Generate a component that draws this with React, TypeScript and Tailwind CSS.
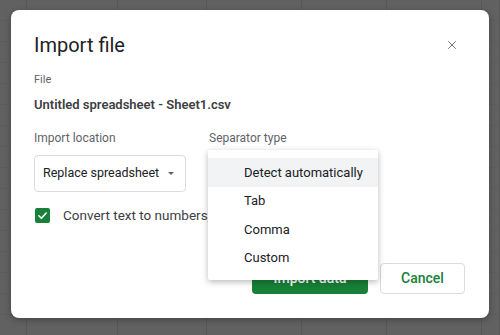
import { X } from 'lucide-react';

const columns = [27, 91, 89, 95, 85, 95, 18];
const rows = Array.from({ length: 16 });

export default function App() {
  return (
    <div className="relative w-[500px] h-[335px] overflow-hidden bg-[#616161] font-['Roboto',sans-serif]">
      {/* dimmed spreadsheet behind the dialog */}
      <div className="flex h-full">
        {columns.map((w, i) => (
          <div key={i} className="flex flex-col shrink-0 border-r border-[#585858]" style={{ width: w }}>
            {rows.map((_, r) => (
              <div key={r} className="h-[21px] shrink-0 border-b border-[#5d5d5d]" />
            ))}
          </div>
        ))}
      </div>

      {/* dialog */}
      <div className="absolute left-[11px] top-[10px] w-[478px] h-[308px] bg-white rounded-[8px] shadow-[0_2px_6px_rgba(0,0,0,0.3)] flex flex-col pl-[23px] pr-[24px] pt-[21px]">
        <div className="flex items-center justify-between h-[28px]">
          <h1 className="text-[20px] leading-[28px] text-[#202124]">Import file</h1>
          <button className="w-[24px] h-[24px] flex items-center justify-center mr-[1px] text-[#5f6368]">
            <X className="w-[14px] h-[14px]" strokeWidth={1.5} />
          </button>
        </div>

        <div className="mt-[13px] text-[11px] leading-[16px] text-[#5f6368]">File</div>
        <div className="mt-[7px] text-[13px] leading-[20px] font-semibold text-[#3c4043]">
          Untitled spreadsheet - Sheet1.csv
        </div>

        <div className="mt-[15px] flex">
          <div className="w-[175px] flex flex-col">
            <div className="text-[12px] leading-[16px] text-[#5f6368]">Import location</div>
            <div className="mt-[9px] w-[152px] h-[37px] border border-[#dadce0] rounded-[4px] flex items-center pl-[8px] gap-[9px]">
              <span className="text-[12.5px] whitespace-nowrap text-[#202124]">Replace spreadsheet</span>
              <span className="w-0 h-0 border-l-[3.5px] border-r-[3.5px] border-t-[3.5px] border-l-transparent border-r-transparent border-t-[#5f6368]" />
            </div>
          </div>
          <div className="flex flex-col">
            <div className="text-[12px] leading-[16px] text-[#5f6368]">Separator type</div>
          </div>
        </div>

        <label className="mt-[16px] flex items-center h-[15px]">
          <span className="ml-[1px] w-[15px] h-[15px] rounded-[2px] bg-[#188038] flex items-center justify-center">
            <svg viewBox="0 0 12 12" className="w-[11px] h-[11px]" fill="none">
              <path d="M2 6.3 L4.8 9 L10 3.3" stroke="white" strokeWidth="1.8" strokeLinecap="round" strokeLinejoin="round" />
            </svg>
          </span>
          <span className="ml-[13px] text-[13.5px] whitespace-nowrap text-[#3c4043]">Convert text to numbers, dates, and formulas</span>
        </label>

        <div className="mt-auto mb-[24px] flex justify-end gap-[12px]">
          <button className="w-[116px] h-[31px] rounded-[4px] bg-[#188038] text-white text-[14px] font-medium">
            Import data
          </button>
          <button className="w-[85px] h-[31px] rounded-[4px] border border-[#dadce0] text-[#188038] text-[14px] font-medium">
            Cancel
          </button>
        </div>
      </div>

      {/* open separator menu */}
      <div className="absolute left-[208px] top-[150px] w-[170px] py-[8px] bg-white rounded-[2px] shadow-[0_2px_6px_rgba(0,0,0,0.28)]">
        {['Detect automatically', 'Tab', 'Comma', 'Custom'].map((item, i) => (
          <div
            key={item}
            className={`h-[28.5px] flex items-center pl-[36px] text-[13px] text-[#202124] ${i === 0 ? 'bg-[#f1f3f4]' : ''}`}
          >
            {item}
          </div>
        ))}
      </div>
    </div>
  );
}
